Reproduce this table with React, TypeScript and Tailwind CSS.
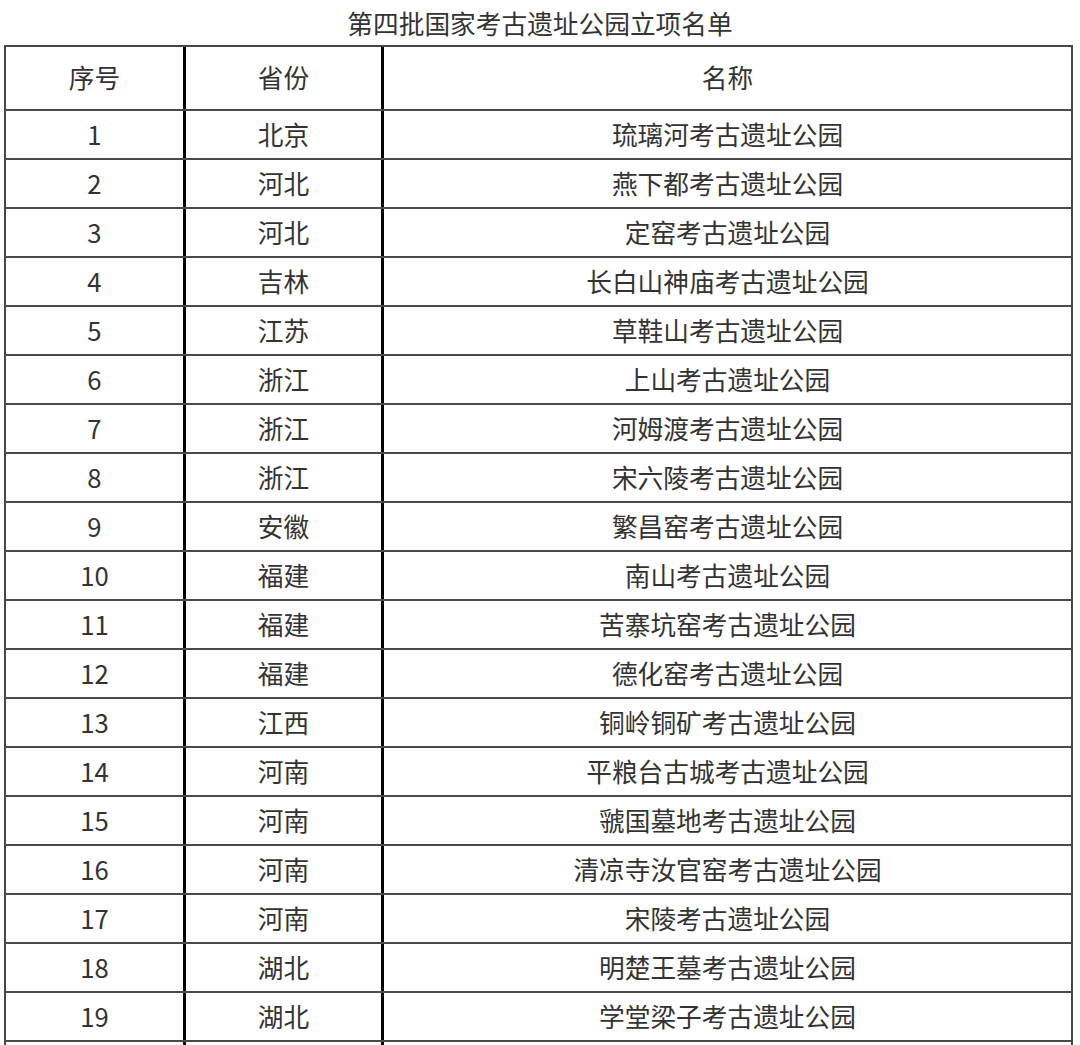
import React from "react";

const rows: [string, string, string][] = [
  ["1", "北京", "琉璃河考古遗址公园"],
  ["2", "河北", "燕下都考古遗址公园"],
  ["3", "河北", "定窑考古遗址公园"],
  ["4", "吉林", "长白山神庙考古遗址公园"],
  ["5", "江苏", "草鞋山考古遗址公园"],
  ["6", "浙江", "上山考古遗址公园"],
  ["7", "浙江", "河姆渡考古遗址公园"],
  ["8", "浙江", "宋六陵考古遗址公园"],
  ["9", "安徽", "繁昌窑考古遗址公园"],
  ["10", "福建", "南山考古遗址公园"],
  ["11", "福建", "苦寨坑窑考古遗址公园"],
  ["12", "福建", "德化窑考古遗址公园"],
  ["13", "江西", "铜岭铜矿考古遗址公园"],
  ["14", "河南", "平粮台古城考古遗址公园"],
  ["15", "河南", "虢国墓地考古遗址公园"],
  ["16", "河南", "清凉寺汝官窑考古遗址公园"],
  ["17", "河南", "宋陵考古遗址公园"],
  ["18", "湖北", "明楚王墓考古遗址公园"],
  ["19", "湖北", "学堂梁子考古遗址公园"],
];

export default function App() {
  return (
    <div
      className="w-[1080px] h-[1045px] overflow-hidden bg-white text-[#333]"
      style={{ fontFamily: '"Noto Sans CJK SC", "Noto Sans", sans-serif' }}
    >
      <div className="h-[45px] flex items-center justify-center text-[25.7px] leading-none pt-[1px]">
        第四批国家考古遗址公园立项名单
      </div>
      <div className="ml-[4px] w-[1069px] border-2 border-b-0 border-[#474747]">
        <div className="flex h-[64px] border-b-2 border-[#4a4a4a] text-[25.7px]">
          <div className="w-[180px] shrink-0 border-r-[3px] border-black flex items-center justify-center pb-[1px]">
            序号
          </div>
          <div className="w-[198px] shrink-0 border-r-[3px] border-black flex items-center justify-center pb-[1px]">
            省份
          </div>
          <div className="flex-1 flex items-center justify-center pb-[1px]">名称</div>
        </div>
        {rows.map(([n, p, name]) => (
          <div key={n} className="flex h-[49px] border-b-2 border-[#4a4a4a] text-[25.7px]">
            <div className="w-[180px] shrink-0 border-r-[3px] border-black flex items-center justify-center">
              {n}
            </div>
            <div className="w-[198px] shrink-0 border-r-[3px] border-black flex items-center justify-center">
              {p}
            </div>
            <div className="flex-1 flex items-center justify-center">{name}</div>
          </div>
        ))}
        <div className="flex h-[49px]">
          <div className="w-[180px] shrink-0 border-r-[3px] border-black" />
          <div className="w-[198px] shrink-0 border-r-[3px] border-black" />
          <div className="flex-1" />
        </div>
      </div>
    </div>
  );
}
